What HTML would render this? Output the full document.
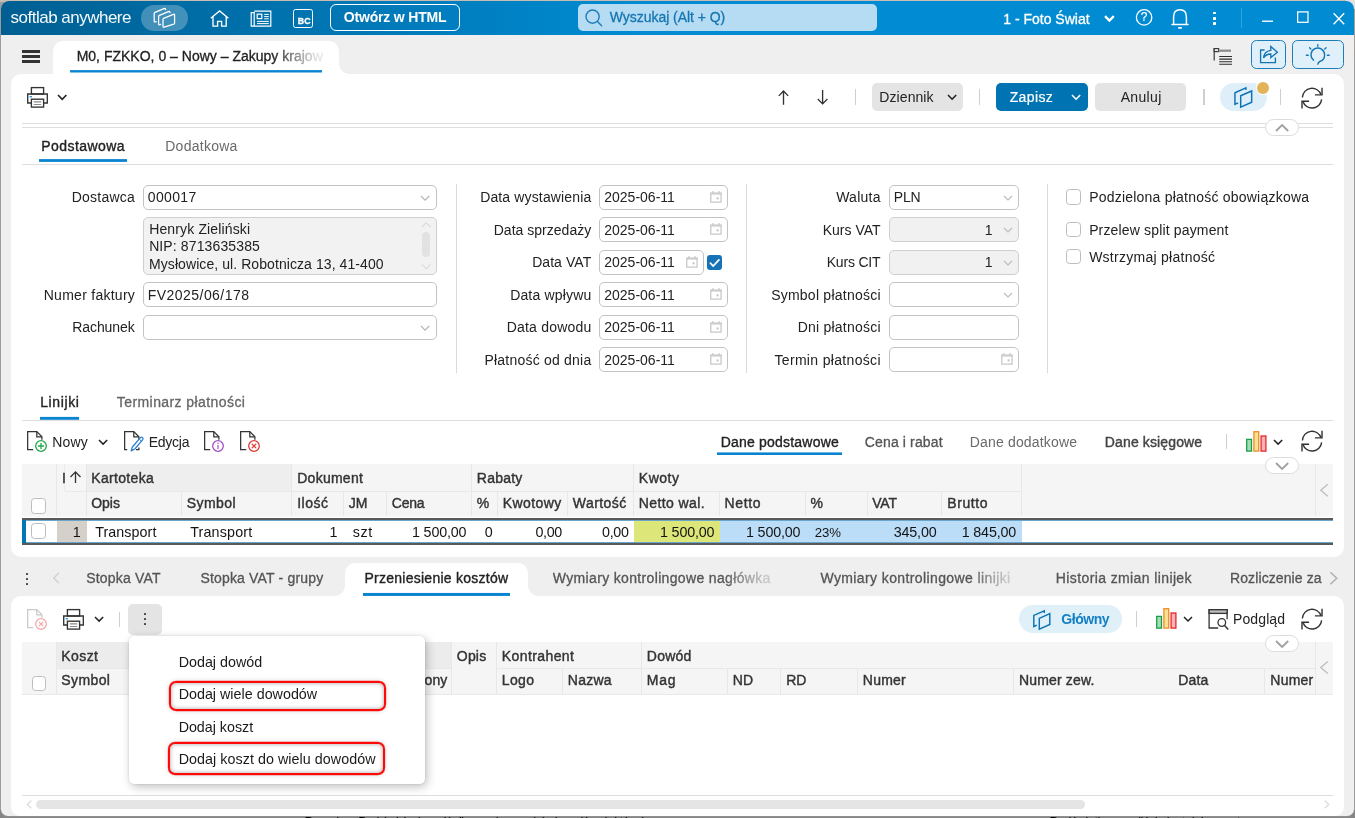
<!DOCTYPE html>
<html lang="pl">
<head>
<meta charset="utf-8">
<title>softlab anywhere – M0, FZKKO, 0 – Nowy – Zakupy krajowe</title>
<style>
html,body{margin:0;padding:0}
body{width:1355px;height:818px;position:relative;overflow:hidden;background:#9e9e9e;font-family:"Liberation Sans",sans-serif;font-size:14px;color:#222}
#app{left:0;top:0;width:1355px;height:818px;overflow:hidden;will-change:transform}
.a,.t,svg.i{position:absolute}
.t{white-space:pre;display:block}
svg.i{overflow:visible;fill:none}
#outer-top{left:0;top:0;width:1355px;height:2px;background:#c9bdb3}
#outer-right{left:1352px;top:0;width:3px;height:818px;background:linear-gradient(180deg,#b3a59c 0,#a0a0a0 70px)}
#outer-tr{left:1346px;top:0;width:9px;height:9px;background:#e2e2e2}
#under{left:0;top:810px;width:1355px;height:8px;background:#858585;overflow:hidden}
#win{left:1px;top:1px;width:1353px;height:815.4px;background:#efefef;border-radius:8px 8px 7px 7px;box-shadow:0 .5px 0 .3px rgba(150,150,150,.8)}
#topbar{left:1px;top:1px;width:1353px;height:33.5px;border-radius:8px 8px 0 0;background:linear-gradient(90deg,#005f92 0,#008bd2 640px)}
.panel{background:#fff}
.hl{height:1px;background:#dedede}
.vl{width:1px;background:#d9d9d9}
.sep{width:1.3px;background:#cfcfcf}
.inp{box-sizing:border-box;border:1px solid #c3c3c3;border-radius:5px;background:#fff;height:25px}
.inp.dis{background:#f1f1f1;border-color:#cfcfcf}
.cb{box-sizing:border-box;width:15px;height:15px;border:1px solid #bdbdbd;border-radius:3.5px;background:#fff}
.btn{border-radius:5px;background:#e4e4e4}
.ul{height:2.7px;background:#0a84cf;border-radius:1px}
.gh{background:#f5f5f5}
.pill{background:#fff;border:1px solid #dcdcdc;border-radius:9px;box-sizing:border-box}
</style>
</head>
<body>
<div class="a" id="app">
<div class="a" id="outer-top"></div><div class="a" id="outer-right"></div><div class="a" id="outer-tr"></div>
<div class="a" id="under"><span class="t" style="left:304.48px;top:813.00px;font-size:13px;line-height:13px;letter-spacing:-1.293px;color:#000;top:4.6px">Procedura „Dodaj wiele dowodów” pozwala na wybór dowodów, do których</span><span class="t" style="left:1049.48px;top:813.00px;font-size:13px;line-height:13px;letter-spacing:-0.591px;color:#000;top:4.6px">Podświetlony na liście jest dokument</span></div>
<div class="a" id="win"></div>

<header id="app-chrome" aria-label="softlab anywhere">
<div class="a" id="topbar"></div>
<span class="t" style="left:10.62px;top:9.00px;font-size:17px;line-height:17px;letter-spacing:-0.511px;color:#fff;opacity:.96">softlab anywhere</span>
<div class="a" style="left:141.3px;top:4.9px;width:47px;height:26px;border-radius:13px;background:rgba(255,255,255,.26)"></div>
<svg class="i" style="left:150px;top:5px" width="30" height="26" viewBox="150 5 30 26" stroke="#fff" stroke-width="1.25" stroke-linejoin="round" stroke-linecap="round">
<path d="M165.6 9.6 Q165.4 8.1 164 8.6 L155 12.4 Q154.2 12.8 154.2 13.6 L154.2 21.2 Q154.2 22.2 155.4 21.9 L156.2 21.6"/>
<path d="M170 12.6 Q169.8 11.1 168.4 11.6 L159.4 15.4 Q158.6 15.8 158.6 16.6 L158.6 24 Q158.6 25 159.8 24.7 L160.6 24.4"/>
<path d="M163.6 18.4 L173.4 14.3 Q174.6 13.9 174.6 15.1 L174.6 23 Q174.6 23.8 173.8 24.1 L164.2 27.1 Q163 27.4 163 26.2 L163 19.4 Q163 18.7 163.6 18.4 Z"/>
</svg>
<svg class="i" style="left:208px;top:8px" width="24" height="22" viewBox="208 8 24 22" stroke="#fff" stroke-width="1.35" stroke-linejoin="miter" stroke-linecap="butt">
<path d="M210.8 18.2 L219.6 10.9 L228.4 18.2"/>
<path d="M213 16.6 L213 26.1 L217.6 26.1 L217.6 21.4 L221.6 21.4 L221.6 26.1 L226.2 26.1 L226.2 16.6"/>
</svg>
<svg class="i" style="left:249px;top:8px" width="24" height="22" viewBox="249 8 24 22" stroke="#fff" stroke-width="1.2">
<path d="M254.2 11.2 H270.8 V26.2 H251.2 V12.6 H254.2 V26.2"/>
<rect x="257.2" y="14.2" width="4.6" height="4.4"/>
<path d="M264.2 14.4 H268.8 M264.2 16.6 H268.8 M264.2 18.8 H268.8 M257 21.4 H268.8 M257 23.6 H268.8" stroke-width="1"/>
</svg>
<div class="a" style="left:293.2px;top:9.2px;width:19.4px;height:18.4px;box-sizing:border-box;border:1.3px solid #fff;border-radius:2.5px"></div>
<span class="t" style="left:297.65px;top:17.00px;font-size:8.8px;line-height:8.8px;font-weight:700;letter-spacing:0.185px;color:#fff;-webkit-text-stroke:.3px">BC</span>
<div class="a" style="left:330px;top:4px;width:130px;height:27px;box-sizing:border-box;border:1.3px solid #fff;border-radius:6px"></div>
<span class="t" style="left:343.84px;top:10.00px;font-size:14px;line-height:14px;font-weight:700;letter-spacing:-0.190px;color:#fff">Otwórz w HTML</span>
<div class="a" style="left:578.4px;top:4px;width:298.6px;height:27px;border-radius:5px;background:#b5dcf2"></div>
<svg class="i" style="left:583px;top:7px" width="22" height="22" viewBox="583 7 22 22" stroke="#1c7db8" stroke-width="1.4" stroke-linecap="round">
<circle cx="592.6" cy="16.6" r="6.6"/><path d="M597.5 21.6 L601.6 25.7"/></svg>
<span class="t" style="left:609.84px;top:10.00px;font-size:14px;line-height:14px;letter-spacing:-0.050px;color:#1776b1;-webkit-text-stroke:.3px">Wyszukaj (Alt + Q)</span>
<span class="t" style="left:1003.24px;top:12.00px;font-size:14px;line-height:14px;color:#fff;-webkit-text-stroke:.3px">1 - Foto Świat</span>
<svg class="i" style="left:1102px;top:12px" width="14" height="14" viewBox="1102 12 14 14" stroke="#fff" stroke-width="2.3"><path d="M1105 16.1 L1109.4 20.5 L1113.8 16.1"/></svg>
<svg class="i" style="left:1133px;top:7px" width="22" height="22" viewBox="1133 7 22 22" stroke="#fff" stroke-width="1.3"><circle cx="1144.1" cy="17.4" r="7.7"/></svg>
<span class="t" style="left:1140.72px;top:11.00px;font-size:12px;line-height:12px;color:#fff;-webkit-text-stroke:.2px">?</span>
<svg class="i" style="left:1168px;top:6px" width="24" height="24" viewBox="1168 6 24 24" stroke="#fff" stroke-width="1.5" stroke-linecap="round" stroke-linejoin="round">
<path d="M1173.6 24.4 V17 Q1173.6 9.8 1180 9.8 Q1186.4 9.8 1186.4 17 V24.4 M1172 24.6 H1188"/><path d="M1178.8 27.8 H1181.2" stroke-width="1.7"/></svg>
<div class="a" style="left:1213.1px;top:11.6px;width:2.7px;height:2.7px;background:#fff;border-radius:.6px"></div>
<div class="a" style="left:1213.1px;top:16.9px;width:2.7px;height:2.7px;background:#fff;border-radius:.6px"></div>
<div class="a" style="left:1213.1px;top:22.1px;width:2.7px;height:2.7px;background:#fff;border-radius:.6px"></div>
<div class="a" style="left:1240.8px;top:7.6px;width:1.2px;height:20.4px;background:#35a3de"></div>
<div class="a" style="left:1262px;top:20px;width:11px;height:2px;background:linear-gradient(180deg,rgba(255,255,255,0.45) 0px,rgba(255,255,255,0.45) 1px,rgba(255,255,255,0.90) 1px,rgba(255,255,255,0.90) 2px)"></div>
<svg class="i" style="left:1294px;top:9px" width="18" height="18" viewBox="1294 9 18 18" stroke="#fff" stroke-width="1.25"><rect x="1297.65" y="11.9" width="10.35" height="10.4"/></svg>
<svg class="i" style="left:1330px;top:10px" width="18" height="18" viewBox="1330 10 18 18" stroke="#fff" stroke-width="1.4"><path d="M1333.6 13.2 L1344.2 24.2 M1344.2 13.2 L1333.6 24.2"/></svg>
<div class="a" style="left:22.2px;top:50.2px;width:18.2px;height:2.5px;background:#333"></div>
<div class="a" style="left:22.2px;top:55.2px;width:18.2px;height:2.5px;background:#333"></div>
<div class="a" style="left:22.2px;top:60.3px;width:18.2px;height:2.5px;background:#333"></div>
<div class="a" style="left:53.3px;top:41.3px;width:286px;height:33px;background:#fff;border-radius:10px 10px 0 0"></div>
<div class="a" style="left:339.2px;top:64px;width:10px;height:10px;background:radial-gradient(circle at 100% 0,rgba(255,255,255,0) 9.5px,#fff 10px)"></div>
<span class="t" style="left:76.64px;top:49.00px;font-size:14px;line-height:14px;letter-spacing:0.008px;-webkit-text-stroke:.3px;padding-bottom:4px;-webkit-mask-image:linear-gradient(90deg,#000 196px,rgba(0,0,0,.12) 240px);mask-image:linear-gradient(90deg,#000 196px,rgba(0,0,0,.12) 240px)">M0, FZKKO, 0 – Nowy – Zakupy krajow</span>
<div class="a" style="left:70px;top:70px;width:252px;height:3px;background:linear-gradient(180deg,rgba(10,132,207,0.90) 0px,rgba(10,132,207,0.90) 1px,rgba(10,132,207,1.00) 1px,rgba(10,132,207,1.00) 2px,rgba(10,132,207,0.50) 2px,rgba(10,132,207,0.50) 3px)"></div>
<svg class="i" style="left:1212px;top:46px" width="22" height="20" viewBox="1212 46 22 20" stroke="#3a3a3a" stroke-width="1.2">
<path d="M1214.2 48 V60.6"/><rect x="1214.2" y="48.6" width="4.4" height="3" fill="#efefef"/><rect x="1218.6" y="49.6" width="12.4" height="2.2" fill="#8a8a8a" stroke="none"/>
<path d="M1219.2 56.5 H1232 M1219.2 59.1 H1232 M1219.2 61.7 H1232 M1219.2 64.3 H1232" stroke-width="1.05" stroke="#2e2e2e"/></svg>
<div class="a" style="left:1251.2px;top:40px;width:34.8px;height:28.6px;box-sizing:border-box;border:1.2px solid #1b7db9;border-radius:5.5px;background:#dff0fa"></div>
<svg class="i" style="left:1256px;top:43px" width="26" height="24" viewBox="1256 43 26 24" stroke="#1475b3" stroke-width="1.35" stroke-linejoin="miter">
<path d="M1264.6 50 H1260.6 V62.6 H1275.4 V57.4"/>
<path d="M1263.6 58 Q1264 51.4 1270.8 50.4 V46.4 L1277.4 52.2 L1270.8 57.6 V54 Q1266 54 1263.6 58 Z"/></svg>
<div class="a" style="left:1291.7px;top:40px;width:52px;height:28.6px;box-sizing:border-box;border:1.2px solid #1b7db9;border-radius:5.5px;background:#dff0fa"></div>
<svg class="i" style="left:1304px;top:42px" width="28" height="26" viewBox="1304 42 28 26" stroke="#1475b3" stroke-width="1.35" stroke-linecap="round">
<path d="M1319.6 61.6 Q1324.6 60 1324.6 55 A6.8 6.8 0 1 0 1313.6 60.2 M1319.6 61.6 Q1318.2 62.6 1317.8 64.2"/>
<path d="M1317.8 44.6 V46.2 M1309.6 47.8 L1310.8 49 M1326 47.8 L1324.8 49 M1306.4 55.2 H1308.2 M1327.4 55.2 H1329.2"/></svg>
<div class="a panel" style="left:11px;top:73.8px;width:1333px;height:483px;border-radius:10px"></div>
<svg class="i" style="left:26.2px;top:86.2px" width="24" height="24" viewBox="-1 -1 24 24" stroke="#333" stroke-width="1.35"><rect x="4.4" y="0.6" width="12.2" height="6.4"/><path d="M4.4 16 H0.7 V7 H20.3 V16 H16.6"/><rect x="4.4" y="12.2" width="12.2" height="7.9" fill="#fff"/><path d="M6.8 14.9 H14.2 M6.8 17.5 H14.2" stroke="#8c8c8c" stroke-width="1.1"/><path d="M2.6 9.7 H5" stroke="#2a8fd6" stroke-width="1.3"/></svg>
<svg class="i" style="left:56.4px;top:93.4px" width="12.4" height="8.3" viewBox="-2 -2 12.4 8.3" stroke="#222" stroke-width="1.6"><path d="M0 0 L4.20 4.30 L8.40 0"/></svg>
<svg class="i" style="left:774px;top:86px" width="60" height="22" viewBox="774 86 60 22" stroke="#333" stroke-width="1.35" stroke-linejoin="miter">
<path d="M783.5 104.8 V91 M778.8 95.9 L783.5 91 L788.2 95.9"/><path d="M822.6 90.1 V103.9 M817.8 99.1 L822.6 103.9 L827.4 99.1"/></svg>
<div class="a sep" style="left:854.8px;top:89.4px;height:15.2px"></div>
<div class="a btn" style="left:872px;top:83px;width:91px;height:28px"></div>
<span class="t" style="left:879.34px;top:90.00px;font-size:14px;line-height:14px;letter-spacing:0.074px">Dziennik</span>
<svg class="i" style="left:945.8px;top:93.4px" width="12.2" height="8.2" viewBox="-2 -2 12.2 8.2" stroke="#222" stroke-width="1.6"><path d="M0 0 L4.10 4.20 L8.20 0"/></svg>
<div class="a sep" style="left:978.6px;top:89.4px;height:15.2px"></div>
<div class="a btn" style="left:996px;top:83px;width:92px;height:28px;background:#0073b2"></div>
<span class="t" style="left:1009.64px;top:90.00px;font-size:14px;line-height:14px;letter-spacing:0.397px;color:#fff;-webkit-text-stroke:.2px">Zapisz</span>
<svg class="i" style="left:1070.4px;top:93.4px" width="12.2" height="8.2" viewBox="-2 -2 12.2 8.2" stroke="#fff" stroke-width="1.6"><path d="M0 0 L4.10 4.20 L8.20 0"/></svg>
<div class="a btn" style="left:1095px;top:83px;width:91px;height:28px"></div>
<span class="t" style="left:1120.64px;top:90.00px;font-size:14px;line-height:14px;letter-spacing:0.340px">Anuluj</span>
<div class="a sep" style="left:1203.4px;top:89.4px;height:15.2px"></div>
<div class="a" style="left:1219.9px;top:83px;width:47px;height:28px;border-radius:14px;background:#deeffa"></div>
<div class="a" style="left:1255.6px;top:79.8px;width:15.6px;height:15.6px;border-radius:50%;background:#fff"></div>
<div class="a" style="left:1257.4px;top:81.6px;width:12px;height:12px;border-radius:50%;background:#e2b357"></div>
<svg class="i" style="left:1232.2px;top:85.3px" width="22.5" height="25.1" viewBox="-2 -2 21.5 24" stroke="#0b73b3" stroke-width="1.39" stroke-linejoin="miter"><path d="M11.3 2.9 V0.8 L0.8 5.4 V16.5 L3.8 15.1"/><path d="M6.3 8.3 L16.8 3.7 V14.5 L6.3 19.1 Z"/></svg>
<div class="a sep" style="left:1280px;top:89.4px;height:15.2px"></div>
<svg class="i" style="left:1298.4px;top:83.5px" width="28" height="28" viewBox="-14.4 -14.4 28.8 28.8" stroke="#333" stroke-width="1.45" stroke-linejoin="miter"><path d="M-9.9 -0.6 A9.9 9.9 0 0 1 9.4 -3.2"/><path d="M10.3 -10.6 V-3.2 H3"/><path d="M9.9 1.4 A9.9 9.9 0 0 1 -9.4 3.4"/><path d="M-10.3 10.8 V3.4 H-3"/></svg>
<div class="a hl" style="left:22px;top:123.1px;width:1311px"></div>
<div class="a hl" style="left:22px;top:127px;width:1311px"></div>
<div class="a pill" style="left:1264.5px;top:119.4px;width:34px;height:16.6px"></div>
<svg class="i" style="left:1273.6px;top:122.5px" width="16.2" height="10.0" viewBox="-2 -2 16.2 10.0" stroke="#a2a2a2" stroke-width="1.9"><path d="M0 6.00 L6.10 0 L12.20 6.00"/></svg>
</header>
<section id="doc-form" aria-label="Podstawowa">
<span class="t" style="left:41.24px;top:139.00px;font-size:14px;line-height:14px;letter-spacing:0.437px;-webkit-text-stroke:.3px;-webkit-text-stroke:.35px">Podstawowa</span>
<span class="t" style="left:165.24px;top:139.00px;font-size:14px;line-height:14px;letter-spacing:0.259px;color:#6a6a6a">Dodatkowa</span>
<div class="a" style="left:39px;top:159px;width:88px;height:3px;background:linear-gradient(180deg,rgba(10,132,207,0.90) 0px,rgba(10,132,207,0.90) 1px,rgba(10,132,207,1.00) 1px,rgba(10,132,207,1.00) 2px,rgba(10,132,207,0.90) 2px,rgba(10,132,207,0.90) 3px)"></div>
<div class="a hl" style="left:22px;top:163.6px;width:1311px"></div>
<span class="t" style="left:71.74px;top:190.00px;font-size:14px;line-height:14px;letter-spacing:0.236px">Dostawca</span>
<div class="a inp" style="left:143px;top:185px;width:294px"></div>
<span class="t" style="left:147.84px;top:190.00px;font-size:14px;line-height:14px;letter-spacing:0.340px">000017</span>
<svg class="i" style="left:419.2px;top:193.6px" width="12.2" height="8.1" viewBox="-2 -2 12.2 8.1" stroke="#b5b5b5" stroke-width="1.2"><path d="M0 0 L4.10 4.10 L8.20 0"/></svg>
<div class="a inp dis" style="left:143px;top:217px;width:294px;height:58px;background:#f2f2f2"></div>
<span class="t" style="left:149.14px;top:222.00px;font-size:14px;line-height:14px;letter-spacing:0.147px">Henryk Zieliński</span>
<span class="t" style="left:149.14px;top:239.00px;font-size:14px;line-height:14px;letter-spacing:0.124px">NIP: 8713635385</span>
<span class="t" style="left:149.04px;top:257.00px;font-size:14px;line-height:14px;letter-spacing:0.075px">Mysłowice, ul. Robotnicza 13, 41-400</span>
<div class="a" style="left:422px;top:231.6px;width:8px;height:25.8px;border-radius:4px;background:#e2e2e2"></div>
<svg class="i" style="left:420px;top:220px" width="12" height="52" viewBox="420 220 12 52" stroke="#dcdcdc" stroke-width="1.2"><path d="M421.8 227 L426.2 222.8 L430.6 227 M421.8 264.4 L426.2 268.6 L430.6 264.4"/></svg>
<span class="t" style="left:43.74px;top:288.00px;font-size:14px;line-height:14px;letter-spacing:0.267px">Numer faktury</span>
<div class="a inp" style="left:143px;top:282px;width:294px"></div>
<span class="t" style="left:147.84px;top:288.00px;font-size:14px;line-height:14px;letter-spacing:0.448px">FV2025/06/178</span>
<span class="t" style="left:72.14px;top:320.00px;font-size:14px;line-height:14px;letter-spacing:-0.047px">Rachunek</span>
<div class="a inp" style="left:143px;top:315px;width:294px"></div>
<svg class="i" style="left:419.2px;top:323.6px" width="12.2" height="8.1" viewBox="-2 -2 12.2 8.1" stroke="#b5b5b5" stroke-width="1.2"><path d="M0 0 L4.10 4.10 L8.20 0"/></svg>
<div class="a vl" style="left:456.4px;top:184.3px;height:188.4px"></div>
<div class="a vl" style="left:746.4px;top:184.3px;height:188.4px"></div>
<div class="a vl" style="left:1047px;top:184.3px;height:188.4px"></div>
<span class="t" style="left:480.14px;top:190.00px;font-size:14px;line-height:14px;letter-spacing:0.146px">Data wystawienia</span>
<div class="a inp" style="left:599px;top:185px;width:129px"></div>
<span class="t" style="left:604.24px;top:190.00px;font-size:14px;line-height:14px;letter-spacing:0.005px">2025-06-11</span>
<svg class="i" style="left:709.2px;top:190.4px" width="14" height="14" viewBox="-1 -1 14 14" stroke="#cdcdcd" stroke-width="1.4"><rect x="0.75" y="2.3" width="10.3" height="8.8"/><path d="M0.05 2.6 H11.75" stroke-width="2"/><path d="M2.8 0.2 V2 M9 0.2 V2" stroke-width="1.7"/><circle cx="7.6" cy="7.4" r="1.15" fill="#c4c4c4" stroke="none"/></svg>
<span class="t" style="left:493.74px;top:223.00px;font-size:14px;line-height:14px;letter-spacing:0.018px">Data sprzedaży</span>
<div class="a inp" style="left:599px;top:217px;width:129px"></div>
<span class="t" style="left:604.24px;top:223.00px;font-size:14px;line-height:14px;letter-spacing:0.005px">2025-06-11</span>
<svg class="i" style="left:709.2px;top:222.4px" width="14" height="14" viewBox="-1 -1 14 14" stroke="#cdcdcd" stroke-width="1.4"><rect x="0.75" y="2.3" width="10.3" height="8.8"/><path d="M0.05 2.6 H11.75" stroke-width="2"/><path d="M2.8 0.2 V2 M9 0.2 V2" stroke-width="1.7"/><circle cx="7.6" cy="7.4" r="1.15" fill="#c4c4c4" stroke="none"/></svg>
<span class="t" style="left:532.14px;top:255.00px;font-size:14px;line-height:14px;letter-spacing:0.071px">Data VAT</span>
<div class="a inp" style="left:599px;top:250px;width:105px"></div>
<span class="t" style="left:604.24px;top:255.00px;font-size:14px;line-height:14px;letter-spacing:0.005px">2025-06-11</span>
<svg class="i" style="left:685.2px;top:255.4px" width="14" height="14" viewBox="-1 -1 14 14" stroke="#cdcdcd" stroke-width="1.4"><rect x="0.75" y="2.3" width="10.3" height="8.8"/><path d="M0.05 2.6 H11.75" stroke-width="2"/><path d="M2.8 0.2 V2 M9 0.2 V2" stroke-width="1.7"/><circle cx="7.6" cy="7.4" r="1.15" fill="#c4c4c4" stroke="none"/></svg>
<span class="t" style="left:510.14px;top:288.00px;font-size:14px;line-height:14px;letter-spacing:0.175px">Data wpływu</span>
<div class="a inp" style="left:599px;top:282px;width:129px"></div>
<span class="t" style="left:604.24px;top:288.00px;font-size:14px;line-height:14px;letter-spacing:0.005px">2025-06-11</span>
<svg class="i" style="left:709.2px;top:287.4px" width="14" height="14" viewBox="-1 -1 14 14" stroke="#cdcdcd" stroke-width="1.4"><rect x="0.75" y="2.3" width="10.3" height="8.8"/><path d="M0.05 2.6 H11.75" stroke-width="2"/><path d="M2.8 0.2 V2 M9 0.2 V2" stroke-width="1.7"/><circle cx="7.6" cy="7.4" r="1.15" fill="#c4c4c4" stroke="none"/></svg>
<span class="t" style="left:506.74px;top:320.00px;font-size:14px;line-height:14px;letter-spacing:0.200px">Data dowodu</span>
<div class="a inp" style="left:599px;top:315px;width:129px"></div>
<span class="t" style="left:604.24px;top:320.00px;font-size:14px;line-height:14px;letter-spacing:0.005px">2025-06-11</span>
<svg class="i" style="left:709.2px;top:320.4px" width="14" height="14" viewBox="-1 -1 14 14" stroke="#cdcdcd" stroke-width="1.4"><rect x="0.75" y="2.3" width="10.3" height="8.8"/><path d="M0.05 2.6 H11.75" stroke-width="2"/><path d="M2.8 0.2 V2 M9 0.2 V2" stroke-width="1.7"/><circle cx="7.6" cy="7.4" r="1.15" fill="#c4c4c4" stroke="none"/></svg>
<span class="t" style="left:484.44px;top:353.00px;font-size:14px;line-height:14px;letter-spacing:0.219px">Płatność od dnia</span>
<div class="a inp" style="left:599px;top:347px;width:129px"></div>
<span class="t" style="left:604.24px;top:353.00px;font-size:14px;line-height:14px;letter-spacing:0.005px">2025-06-11</span>
<svg class="i" style="left:709.2px;top:352.4px" width="14" height="14" viewBox="-1 -1 14 14" stroke="#cdcdcd" stroke-width="1.4"><rect x="0.75" y="2.3" width="10.3" height="8.8"/><path d="M0.05 2.6 H11.75" stroke-width="2"/><path d="M2.8 0.2 V2 M9 0.2 V2" stroke-width="1.7"/><circle cx="7.6" cy="7.4" r="1.15" fill="#c4c4c4" stroke="none"/></svg>
<div class="a" style="left:706.8px;top:254.7px;width:15.2px;height:15.2px;border-radius:3px;background:#1673b5"></div>
<svg class="i" style="left:706.8px;top:254.7px" width="15.2" height="15.2" viewBox="0 0 15.2 15.2" stroke="#fff" stroke-width="1.7"><path d="M2.9 7.6 L6.2 11 L12.4 4.4"/></svg>
<span class="t" style="left:836.14px;top:190.00px;font-size:14px;line-height:14px;letter-spacing:0.271px">Waluta</span>
<div class="a inp" style="left:889px;top:185px;width:130px"></div>
<svg class="i" style="left:1002.0px;top:193.6px" width="12.0" height="8.0" viewBox="-2 -2 12.0 8.0" stroke="#bdbdbd" stroke-width="1.2"><path d="M0 0 L4.00 4.00 L8.00 0"/></svg>
<span class="t" style="left:822.74px;top:223.00px;font-size:14px;line-height:14px">Kurs VAT</span>
<div class="a inp dis" style="left:889px;top:217px;width:130px"></div>
<svg class="i" style="left:1002.0px;top:225.6px" width="12.0" height="8.0" viewBox="-2 -2 12.0 8.0" stroke="#bdbdbd" stroke-width="1.2"><path d="M0 0 L4.00 4.00 L8.00 0"/></svg>
<span class="t" style="left:984.76px;top:223.00px;font-size:14px;line-height:14px">1</span>
<span class="t" style="left:826.74px;top:255.00px;font-size:14px;line-height:14px;letter-spacing:-0.202px">Kurs CIT</span>
<div class="a inp dis" style="left:889px;top:250px;width:130px"></div>
<svg class="i" style="left:1002.0px;top:258.6px" width="12.0" height="8.0" viewBox="-2 -2 12.0 8.0" stroke="#bdbdbd" stroke-width="1.2"><path d="M0 0 L4.00 4.00 L8.00 0"/></svg>
<span class="t" style="left:984.76px;top:255.00px;font-size:14px;line-height:14px">1</span>
<span class="t" style="left:771.14px;top:288.00px;font-size:14px;line-height:14px;letter-spacing:0.239px">Symbol płatności</span>
<div class="a inp" style="left:889px;top:282px;width:130px"></div>
<svg class="i" style="left:1002.0px;top:290.6px" width="12.0" height="8.0" viewBox="-2 -2 12.0 8.0" stroke="#bdbdbd" stroke-width="1.2"><path d="M0 0 L4.00 4.00 L8.00 0"/></svg>
<span class="t" style="left:797.74px;top:320.00px;font-size:14px;line-height:14px;letter-spacing:0.222px">Dni płatności</span>
<div class="a inp" style="left:889px;top:315px;width:130px"></div>
<span class="t" style="left:774.44px;top:353.00px;font-size:14px;line-height:14px;letter-spacing:0.331px">Termin płatności</span>
<div class="a inp" style="left:889px;top:347px;width:130px"></div>
<span class="t" style="left:893.84px;top:190.00px;font-size:14px;line-height:14px;letter-spacing:-0.257px">PLN</span>
<svg class="i" style="left:999.6px;top:352.4px" width="14" height="14" viewBox="-1 -1 14 14" stroke="#cdcdcd" stroke-width="1.4"><rect x="0.75" y="2.3" width="10.3" height="8.8"/><path d="M0.05 2.6 H11.75" stroke-width="2"/><path d="M2.8 0.2 V2 M9 0.2 V2" stroke-width="1.7"/><circle cx="7.6" cy="7.4" r="1.15" fill="#c4c4c4" stroke="none"/></svg>
<div class="a cb" style="left:1066px;top:189px;height:16px"></div>
<span class="t" style="left:1089.14px;top:190.00px;font-size:14px;line-height:14px;letter-spacing:0.222px">Podzielona płatność obowiązkowa</span>
<div class="a cb" style="left:1066px;top:222px;height:15px"></div>
<span class="t" style="left:1089.14px;top:223.00px;font-size:14px;line-height:14px;letter-spacing:0.157px">Przelew split payment</span>
<div class="a cb" style="left:1066px;top:249px;height:15px"></div>
<span class="t" style="left:1089.14px;top:250.00px;font-size:14px;line-height:14px;letter-spacing:0.268px">Wstrzymaj płatność</span>
</section>
<section id="lines-grid" aria-label="Linijki">
<span class="t" style="left:40.24px;top:395.00px;font-size:14px;line-height:14px;letter-spacing:0.601px;-webkit-text-stroke:.3px;-webkit-text-stroke:.35px">Linijki</span>
<span class="t" style="left:116.84px;top:395.00px;font-size:14px;line-height:14px;letter-spacing:0.417px;color:#666;-webkit-text-stroke:.3px">Terminarz płatności</span>
<div class="a" style="left:40px;top:416px;width:39px;height:4px;background:linear-gradient(180deg,rgba(10,132,207,0.10) 0px,rgba(10,132,207,0.10) 1px,rgba(10,132,207,1.00) 1px,rgba(10,132,207,1.00) 2px,rgba(10,132,207,1.00) 2px,rgba(10,132,207,1.00) 3px,rgba(10,132,207,0.80) 3px,rgba(10,132,207,0.80) 4px)"></div>
<div class="a hl" style="left:22px;top:420px;width:1311px"></div>
<svg class="i" style="left:26.2px;top:430.4px" width="26" height="24" viewBox="-1 -1 26 24" stroke="#333" stroke-width="1.25" stroke-linejoin="miter"><path d="M6.2 18.7 H0.65 V0.65 H9.8 L14.9 5.8 V8.8"/><path d="M9.8 0.8 V5.8 H14.8"/></svg>
<svg class="i" style="left:33.8px;top:439.1px" width="14" height="14" viewBox="-7 -7 14 14" stroke="#1fa84a" stroke-width="1.3"><circle cx="0" cy="0" r="5.3" fill="#fff"/><path d="M-3 0 H3 M0 -3 V3"/></svg>
<span class="t" style="left:52.24px;top:435.00px;font-size:14px;line-height:14px;letter-spacing:0.168px">Nowy</span>
<svg class="i" style="left:96.6px;top:437.6px" width="12.2" height="8.1" viewBox="-2 -2 12.2 8.1" stroke="#222" stroke-width="1.5"><path d="M0 0 L4.10 4.10 L8.20 0"/></svg>
<svg class="i" style="left:123.2px;top:430.4px" width="26" height="24" viewBox="-1 -1 26 24" stroke="#333" stroke-width="1.25" stroke-linejoin="miter"><path d="M3.2 18.7 H0.65 V0.65 H9.8 L14.9 5.8 V8.8"/><path d="M9.8 0.8 V5.8 H14.8"/><path d="M12 18.7 H14.9 V16.6"/></svg>
<svg class="i" style="left:128px;top:434px" width="18" height="20" viewBox="128 434 18 20" stroke="#2a7fd0" stroke-width="1.3" stroke-linejoin="round"><path d="M131.2 450.8 L132.4 447 L140.4 437.6 Q141.6 436.6 142.6 437.6 Q143.6 438.6 142.6 439.8 L134.8 449 Z" fill="#fff"/><path d="M139.2 439 L141.4 441.2" stroke-width="1"/></svg>
<span class="t" style="left:148.74px;top:435.00px;font-size:14px;line-height:14px;letter-spacing:-0.262px">Edycja</span>
<svg class="i" style="left:203.4px;top:430.4px" width="26" height="24" viewBox="-1 -1 26 24" stroke="#333" stroke-width="1.25" stroke-linejoin="miter"><path d="M6.2 18.7 H0.65 V0.65 H9.8 L14.9 5.8 V8.8"/><path d="M9.8 0.8 V5.8 H14.8"/></svg>
<svg class="i" style="left:210.8px;top:439.1px" width="14" height="14" viewBox="-7 -7 14 14" stroke="#a04fc0" stroke-width="1.3"><circle cx="0" cy="0" r="5.3" fill="#fff"/><path d="M0 -0.9 V3" stroke-width="1.2"/><circle cx="0" cy="-2.7" r=".75" fill="#a04fc0" stroke="none"/></svg>
<svg class="i" style="left:239.4px;top:430.4px" width="26" height="24" viewBox="-1 -1 26 24" stroke="#333" stroke-width="1.25" stroke-linejoin="miter"><path d="M6.2 18.7 H0.65 V0.65 H9.8 L14.9 5.8 V8.8"/><path d="M9.8 0.8 V5.8 H14.8"/></svg>
<svg class="i" style="left:247.0px;top:439.1px" width="14" height="14" viewBox="-7 -7 14 14" stroke="#e53935" stroke-width="1.3"><circle cx="0" cy="0" r="5.3" fill="#fff"/><path d="M-2.1 -2.1 L2.1 2.1 M2.1 -2.1 L-2.1 2.1"/></svg>
<span class="t" style="left:720.64px;top:435.00px;font-size:14px;line-height:14px;letter-spacing:0.209px;-webkit-text-stroke:.3px;-webkit-text-stroke:.35px">Dane podstawowe</span>
<div class="a" style="left:717px;top:452px;width:125px;height:3px;background:linear-gradient(180deg,rgba(10,132,207,0.60) 0px,rgba(10,132,207,0.60) 1px,rgba(10,132,207,1.00) 1px,rgba(10,132,207,1.00) 2px,rgba(10,132,207,1.00) 2px,rgba(10,132,207,1.00) 3px)"></div>
<span class="t" style="left:864.84px;top:435.00px;font-size:14px;line-height:14px;letter-spacing:0.131px;color:#555;-webkit-text-stroke:.3px">Cena i rabat</span>
<span class="t" style="left:969.84px;top:435.00px;font-size:14px;line-height:14px;letter-spacing:0.157px;color:#6a6a6a">Dane dodatkowe</span>
<span class="t" style="left:1104.84px;top:435.00px;font-size:14px;line-height:14px;letter-spacing:0.132px;color:#444;-webkit-text-stroke:.3px;-webkit-text-stroke:.4px">Dane księgowe</span>
<div class="a sep" style="left:1226px;top:433.6px;height:15.2px"></div>
<svg class="i" style="left:1244.6px;top:429.6px" width="23" height="23" viewBox="-1 -1 23 23" stroke-width="1.3"><rect x="0.7" y="8.4" width="4.8" height="11.7" fill="#a9dcb6" stroke="#17a04a"/><rect x="7.9" y="0.7" width="4.8" height="19.4" fill="#fbe092" stroke="#f08c28"/><rect x="15.1" y="5" width="4.8" height="15.1" fill="#f6b4b6" stroke="#e6262c"/></svg>
<svg class="i" style="left:1272.4px;top:437.6px" width="12.2" height="8.1" viewBox="-2 -2 12.2 8.1" stroke="#222" stroke-width="1.5"><path d="M0 0 L4.10 4.10 L8.20 0"/></svg>
<svg class="i" style="left:1298.4px;top:427.4px" width="28" height="28" viewBox="-14.4 -14.4 28.8 28.8" stroke="#333" stroke-width="1.45" stroke-linejoin="miter"><path d="M-9.9 -0.6 A9.9 9.9 0 0 1 9.4 -3.2"/><path d="M10.3 -10.6 V-3.2 H3"/><path d="M9.9 1.4 A9.9 9.9 0 0 1 -9.4 3.4"/><path d="M-10.3 10.8 V3.4 H-3"/></svg>
<div class="a gh" style="left:22px;top:464px;width:1311px;height:52px"></div>
<div class="a" style="left:22px;top:516px;width:1311px;height:1px;background:#f9f9f9"></div>
<div class="a" style="left:86px;top:464px;width:206px;height:27px;background:#eeeeee"></div>
<div class="a" style="left:65px;top:464px;width:21px;height:27px;background:#f6f6f6;box-shadow:-1px 0 0 #ececec"></div>
<div class="a" style="left:65px;top:491px;width:956.6px;height:1px;background:#e8e8e8"></div>
<div class="a" style="left:56px;top:464px;width:1px;height:52px;background:#e8e8e8"></div>
<div class="a" style="left:86px;top:464px;width:1px;height:52px;background:#e8e8e8"></div>
<div class="a" style="left:291px;top:464px;width:1px;height:52px;background:#e8e8e8"></div>
<div class="a" style="left:471px;top:464px;width:1px;height:52px;background:#e8e8e8"></div>
<div class="a" style="left:633px;top:464px;width:1px;height:52px;background:#e8e8e8"></div>
<div class="a" style="left:1021px;top:464px;width:1px;height:52px;background:#e8e8e8"></div>
<div class="a" style="left:1315px;top:464px;width:1px;height:52px;background:#e8e8e8"></div>
<div class="a" style="left:181px;top:491px;width:1px;height:25px;background:#e8e8e8"></div>
<div class="a" style="left:343px;top:491px;width:1px;height:25px;background:#e8e8e8"></div>
<div class="a" style="left:386px;top:491px;width:1px;height:25px;background:#e8e8e8"></div>
<div class="a" style="left:497px;top:491px;width:1px;height:25px;background:#e8e8e8"></div>
<div class="a" style="left:567px;top:491px;width:1px;height:25px;background:#e8e8e8"></div>
<div class="a" style="left:719px;top:491px;width:1px;height:25px;background:#e8e8e8"></div>
<div class="a" style="left:805px;top:491px;width:1px;height:25px;background:#e8e8e8"></div>
<div class="a" style="left:867px;top:491px;width:1px;height:25px;background:#e8e8e8"></div>
<div class="a" style="left:941px;top:491px;width:1px;height:25px;background:#e8e8e8"></div>
<span class="t" style="left:62.04px;top:471.00px;font-size:14px;line-height:14px;color:#333;-webkit-text-stroke:.3px;-webkit-text-stroke:.4px">I</span>
<svg class="i" style="left:70px;top:470px" width="14" height="16" viewBox="70 470 14 16" stroke="#333" stroke-width="1.3"><path d="M75.5 482.9 V471.9 M70.5 477 L75.5 471.9 L80.5 477"/></svg>
<span class="t" style="left:91.24px;top:471.00px;font-size:14px;line-height:14px;letter-spacing:0.335px;color:#333;-webkit-text-stroke:.3px;-webkit-text-stroke:.4px">Kartoteka</span>
<span class="t" style="left:297.24px;top:471.00px;font-size:14px;line-height:14px;letter-spacing:0.258px;color:#333;-webkit-text-stroke:.3px;-webkit-text-stroke:.4px">Dokument</span>
<span class="t" style="left:476.84px;top:471.00px;font-size:14px;line-height:14px;letter-spacing:0.212px;color:#333;-webkit-text-stroke:.3px;-webkit-text-stroke:.4px">Rabaty</span>
<span class="t" style="left:638.84px;top:471.00px;font-size:14px;line-height:14px;letter-spacing:0.499px;color:#333;-webkit-text-stroke:.3px;-webkit-text-stroke:.4px">Kwoty</span>
<span class="t" style="left:91.24px;top:496.00px;font-size:14px;line-height:14px;letter-spacing:-0.026px;color:#333;-webkit-text-stroke:.3px;-webkit-text-stroke:.4px">Opis</span>
<span class="t" style="left:186.84px;top:496.00px;font-size:14px;line-height:14px;letter-spacing:0.406px;color:#333;-webkit-text-stroke:.3px;-webkit-text-stroke:.4px">Symbol</span>
<span class="t" style="left:297.24px;top:496.00px;font-size:14px;line-height:14px;letter-spacing:0.481px;color:#333;-webkit-text-stroke:.3px;-webkit-text-stroke:.4px">Ilość</span>
<span class="t" style="left:348.84px;top:496.00px;font-size:14px;line-height:14px;color:#333;-webkit-text-stroke:.3px;-webkit-text-stroke:.4px">JM</span>
<span class="t" style="left:391.84px;top:496.00px;font-size:14px;line-height:14px;letter-spacing:-0.250px;color:#333;-webkit-text-stroke:.3px;-webkit-text-stroke:.4px">Cena</span>
<span class="t" style="left:476.84px;top:496.00px;font-size:14px;line-height:14px;color:#333;-webkit-text-stroke:.3px;-webkit-text-stroke:.4px">%</span>
<span class="t" style="left:502.84px;top:496.00px;font-size:14px;line-height:14px;letter-spacing:0.398px;color:#333;-webkit-text-stroke:.3px;-webkit-text-stroke:.4px">Kwotowy</span>
<span class="t" style="left:572.84px;top:496.00px;font-size:14px;line-height:14px;letter-spacing:0.432px;color:#333;-webkit-text-stroke:.3px;-webkit-text-stroke:.4px">Wartość</span>
<span class="t" style="left:638.84px;top:496.00px;font-size:14px;line-height:14px;letter-spacing:0.386px;color:#333;-webkit-text-stroke:.3px;-webkit-text-stroke:.4px">Netto wal.</span>
<span class="t" style="left:724.44px;top:496.00px;font-size:14px;line-height:14px;letter-spacing:0.663px;color:#333;-webkit-text-stroke:.3px;-webkit-text-stroke:.4px">Netto</span>
<span class="t" style="left:810.44px;top:496.00px;font-size:14px;line-height:14px;color:#333;-webkit-text-stroke:.3px;-webkit-text-stroke:.4px">%</span>
<span class="t" style="left:872.24px;top:496.00px;font-size:14px;line-height:14px;letter-spacing:-0.218px;color:#333;-webkit-text-stroke:.3px;-webkit-text-stroke:.4px">VAT</span>
<span class="t" style="left:947.24px;top:496.00px;font-size:14px;line-height:14px;letter-spacing:0.592px;color:#333;-webkit-text-stroke:.3px;-webkit-text-stroke:.4px">Brutto</span>
<div class="a cb" style="left:31px;top:498px;width:15px;height:16px"></div>
<div class="a pill" style="left:1264.5px;top:457px;width:34px;height:16.6px"></div>
<svg class="i" style="left:1273.6px;top:460.6px" width="16.2" height="10.0" viewBox="-2 -2 16.2 10.0" stroke="#a2a2a2" stroke-width="1.9"><path d="M0 0 L6.10 6.00 L12.20 0"/></svg>
<svg class="i" style="left:1318px;top:482px" width="12" height="16" viewBox="1318 482 12 16" stroke="#bdbdbd" stroke-width="1.3"><path d="M1327.8 484.2 L1320.8 490.2 L1327.8 496.2"/></svg>
<div class="a" style="left:22px;top:518px;width:1311px;height:27px;background:#5a5a5a"></div>
<div class="a" style="left:22px;top:520.3px;width:1311px;height:22.3px;background:#6aa5cb"></div>
<div class="a" style="left:22px;top:521px;width:1311px;height:21px;background:#fff"></div>
<div class="a" style="left:22px;top:520.3px;width:4px;height:22.6px;background:#0077b6"></div>
<div class="a" style="left:57px;top:521px;width:29.6px;height:21px;background:#d5d1ca"></div>
<div class="a" style="left:634px;top:521px;width:86px;height:21px;background:#dde678"></div>
<div class="a" style="left:720px;top:521px;width:301.6px;height:21px;background:#bbddf8"></div>
<div class="a cb" style="left:31px;top:523px;width:15px;height:16px"></div>
<span class="t" style="left:72.82px;top:525.00px;font-size:14.3px;line-height:14.3px;color:#141414">1</span>
<span class="t" style="left:95.23px;top:525.00px;font-size:14.3px;line-height:14.3px;letter-spacing:0.061px;color:#141414">Transport</span>
<span class="t" style="left:190.23px;top:525.00px;font-size:14.3px;line-height:14.3px;letter-spacing:0.161px;color:#141414">Transport</span>
<span class="t" style="left:329.42px;top:525.00px;font-size:14.3px;line-height:14.3px;color:#141414">1</span>
<span class="t" style="left:352.83px;top:525.00px;font-size:14.3px;line-height:14.3px;letter-spacing:0.581px;color:#141414">szt</span>
<span class="t" style="left:412.03px;top:525.00px;font-size:14.3px;line-height:14.3px;letter-spacing:-0.159px;color:#141414">1 500,00</span>
<span class="t" style="left:484.63px;top:525.00px;font-size:14.3px;line-height:14.3px;color:#141414">0</span>
<span class="t" style="left:535.43px;top:525.00px;font-size:14.3px;line-height:14.3px;letter-spacing:-0.328px;color:#141414">0,00</span>
<span class="t" style="left:602.03px;top:525.00px;font-size:14.3px;line-height:14.3px;letter-spacing:-0.328px;color:#141414">0,00</span>
<span class="t" style="left:660.03px;top:525.00px;font-size:14.3px;line-height:14.3px;letter-spacing:-0.159px;color:#141414">1 500,00</span>
<span class="t" style="left:746.03px;top:525.00px;font-size:14.3px;line-height:14.3px;letter-spacing:-0.159px;color:#141414">1 500,00</span>
<span class="t" style="left:814.67px;top:526.00px;font-size:13.2px;line-height:13.2px;color:#141414">23%</span>
<span class="t" style="left:893.63px;top:525.00px;font-size:14.3px;line-height:14.3px;letter-spacing:-0.118px;color:#141414">345,00</span>
<span class="t" style="left:961.73px;top:525.00px;font-size:14.3px;line-height:14.3px;letter-spacing:-0.159px;color:#141414">1 845,00</span>
</section>
<section id="cost-transfer" aria-label="Przeniesienie kosztów">
<div class="a" style="left:26.3px;top:573.1px;width:2.2px;height:2.2px;background:#444;border-radius:.5px"></div>
<div class="a" style="left:26.3px;top:577.8px;width:2.2px;height:2.2px;background:#444;border-radius:.5px"></div>
<div class="a" style="left:26.3px;top:582.5px;width:2.2px;height:2.2px;background:#444;border-radius:.5px"></div>
<svg class="i" style="left:51px;top:570px" width="12" height="16" viewBox="51 570 12 16" stroke="#cfcfcf" stroke-width="1.3"><path d="M59 572.8 L53.8 578 L59 583.2"/></svg>
<span class="t" style="left:86.24px;top:571.00px;font-size:14px;line-height:14px;letter-spacing:0.188px;color:#555;-webkit-text-stroke:.3px">Stopka VAT</span>
<span class="t" style="left:200.44px;top:571.00px;font-size:14px;line-height:14px;letter-spacing:0.169px;color:#555;-webkit-text-stroke:.3px">Stopka VAT - grupy</span>
<div class="a" style="left:344.5px;top:563.2px;width:183px;height:33px;background:#fff;border-radius:10px 10px 0 0"></div>
<div class="a" style="left:334.5px;top:586px;width:10px;height:10px;background:radial-gradient(circle at 0 0,rgba(255,255,255,0) 9.5px,#fff 10px)"></div>
<div class="a" style="left:527.5px;top:586px;width:10px;height:10px;background:radial-gradient(circle at 100% 0,rgba(255,255,255,0) 9.5px,#fff 10px)"></div>
<span class="t" style="left:364.44px;top:571.00px;font-size:14px;line-height:14px;letter-spacing:0.260px;-webkit-text-stroke:.3px;-webkit-text-stroke:.35px">Przeniesienie kosztów</span>
<div class="a" style="left:363px;top:592px;width:147px;height:4px;background:linear-gradient(180deg,rgba(10,132,207,0.05) 0px,rgba(10,132,207,0.05) 1px,rgba(10,132,207,1.00) 1px,rgba(10,132,207,1.00) 2px,rgba(10,132,207,1.00) 2px,rgba(10,132,207,1.00) 3px,rgba(10,132,207,0.95) 3px,rgba(10,132,207,0.95) 4px)"></div>
<span class="t" style="left:552.84px;top:571.00px;font-size:14px;line-height:14px;letter-spacing:0.341px;color:#555;-webkit-text-stroke:.3px;padding-bottom:4px;-webkit-mask-image:linear-gradient(90deg,#000 170px,rgba(0,0,0,.25) 212px);mask-image:linear-gradient(90deg,#000 170px,rgba(0,0,0,.25) 212px)">Wymiary kontrolingowe nagłówka</span>
<span class="t" style="left:820.44px;top:571.00px;font-size:14px;line-height:14px;letter-spacing:0.389px;color:#555;-webkit-text-stroke:.3px;padding-bottom:4px;-webkit-mask-image:linear-gradient(90deg,#000 150px,rgba(0,0,0,.25) 186px);mask-image:linear-gradient(90deg,#000 150px,rgba(0,0,0,.25) 186px)">Wymiary kontrolingowe linijki</span>
<span class="t" style="left:1055.84px;top:571.00px;font-size:14px;line-height:14px;letter-spacing:0.387px;color:#555;-webkit-text-stroke:.3px">Historia zmian linijek</span>
<span class="t" style="left:1230.04px;top:571.00px;font-size:14px;line-height:14px;letter-spacing:0.096px;color:#555;-webkit-text-stroke:.3px">Rozliczenie za</span>
<svg class="i" style="left:1327px;top:570px" width="14" height="16" viewBox="1327 570 14 16" stroke="#aaa" stroke-width="1.3"><path d="M1330.4 572.2 L1336.8 578.2 L1330.4 584.2"/></svg>
<div class="a panel" style="left:11px;top:596.2px;width:1333px;height:220px;border-radius:10px 10px 9px 9px"></div>
<svg class="i" style="left:26.2px;top:608.4px" width="26" height="24" viewBox="-1 -1 26 24" stroke="#c9c9c9" stroke-width="1.25" stroke-linejoin="miter"><path d="M6.2 18.7 H0.65 V0.65 H9.8 L14.9 5.8 V8.8"/><path d="M9.8 0.8 V5.8 H14.8"/></svg>
<svg class="i" style="left:33.8px;top:617.2px" width="14" height="14" viewBox="-7 -7 14 14" stroke="#f3a9a7" stroke-width="1.3"><circle cx="0" cy="0" r="5.3" fill="#fff"/><path d="M-2.1 -2.1 L2.1 2.1 M2.1 -2.1 L-2.1 2.1"/></svg>
<svg class="i" style="left:62.0px;top:608.4px" width="24" height="24" viewBox="-1 -1 24 24" stroke="#333" stroke-width="1.35"><rect x="4.4" y="0.6" width="12.2" height="6.4"/><path d="M4.4 16 H0.7 V7 H20.3 V16 H16.6"/><rect x="4.4" y="12.2" width="12.2" height="7.9" fill="#fff"/><path d="M6.8 14.9 H14.2 M6.8 17.5 H14.2" stroke="#8c8c8c" stroke-width="1.1"/><path d="M2.6 9.7 H5" stroke="#2a8fd6" stroke-width="1.3"/></svg>
<svg class="i" style="left:92.8px;top:615.4px" width="12.2" height="8.1" viewBox="-2 -2 12.2 8.1" stroke="#222" stroke-width="1.5"><path d="M0 0 L4.10 4.10 L8.20 0"/></svg>
<div class="a sep" style="left:118.8px;top:611.6px;height:15.2px"></div>
<div class="a btn" style="left:128.3px;top:604.4px;width:34px;height:30.4px"></div>
<div class="a" style="left:143.9px;top:613.3px;width:2.2px;height:2.2px;background:#444;border-radius:.5px"></div>
<div class="a" style="left:143.9px;top:618.1px;width:2.2px;height:2.2px;background:#444;border-radius:.5px"></div>
<div class="a" style="left:143.9px;top:622.9px;width:2.2px;height:2.2px;background:#444;border-radius:.5px"></div>
<div class="a" style="left:1018.6px;top:605px;width:103.4px;height:28px;border-radius:14px;background:#e0f0f9"></div>
<svg class="i" style="left:1031.3px;top:607.5px" width="21.5" height="24.0" viewBox="-2 -2 21.5 24" stroke="#0b73b3" stroke-width="1.45" stroke-linejoin="miter"><path d="M11.3 2.9 V0.8 L0.8 5.4 V16.5 L3.8 15.1"/><path d="M6.3 8.3 L16.8 3.7 V14.5 L6.3 19.1 Z"/></svg>
<span class="t" style="left:1061.34px;top:612.00px;font-size:14px;line-height:14px;font-weight:700;letter-spacing:-0.448px;color:#1480c4">Główny</span>
<div class="a sep" style="left:1135.6px;top:611.4px;height:15.2px"></div>
<svg class="i" style="left:1154.8px;top:607.4px" width="23" height="23" viewBox="-1 -1 23 23" stroke-width="1.3"><rect x="0.7" y="8.4" width="4.8" height="11.7" fill="#a9dcb6" stroke="#17a04a"/><rect x="7.9" y="0.7" width="4.8" height="19.4" fill="#fbe092" stroke="#f08c28"/><rect x="15.1" y="5" width="4.8" height="15.1" fill="#f6b4b6" stroke="#e6262c"/></svg>
<svg class="i" style="left:1181.6px;top:615.4px" width="12.0" height="8.0" viewBox="-2 -2 12.0 8.0" stroke="#222" stroke-width="1.5"><path d="M0 0 L4.00 4.00 L8.00 0"/></svg>
<svg class="i" style="left:1206px;top:607px" width="26" height="26" viewBox="1206 607 26 26" stroke="#333" stroke-width="1.3">
<path d="M1218.2 628 H1209.1 V609.7 H1227.1 V619.2"/><rect x="1209.1" y="609.7" width="18" height="3.7" fill="#bcbcbc"/><circle cx="1221.8" cy="622.5" r="3.8" fill="#fff"/><path d="M1224.4 625.2 L1228.2 629.4" stroke-width="1.5"/></svg>
<span class="t" style="left:1233.04px;top:612.00px;font-size:14px;line-height:14px;letter-spacing:0.105px">Podgląd</span>
<svg class="i" style="left:1298.4px;top:605.2px" width="28" height="28" viewBox="-14.4 -14.4 28.8 28.8" stroke="#333" stroke-width="1.45" stroke-linejoin="miter"><path d="M-9.9 -0.6 A9.9 9.9 0 0 1 9.4 -3.2"/><path d="M10.3 -10.6 V-3.2 H3"/><path d="M9.9 1.4 A9.9 9.9 0 0 1 -9.4 3.4"/><path d="M-10.3 10.8 V3.4 H-3"/></svg>
<div class="a gh" style="left:22px;top:642px;width:1311px;height:52.2px"></div>
<div class="a" style="left:22px;top:642px;width:34px;height:52.2px;background:#f5f5f5"></div>
<div class="a" style="left:56px;top:642px;width:395.6px;height:26px;background:#ececec"></div>
<div class="a" style="left:22px;top:694px;width:1311px;height:1px;background:#e8e8e8"></div>
<div class="a" style="left:56px;top:668px;width:395.6px;height:1px;background:#e8e8e8"></div>
<div class="a" style="left:496.6px;top:668px;width:818.8px;height:1px;background:#e8e8e8"></div>
<div class="a" style="left:56px;top:642px;width:1px;height:52px;background:#e8e8e8"></div>
<div class="a" style="left:451px;top:642px;width:1px;height:52px;background:#e8e8e8"></div>
<div class="a" style="left:496px;top:642px;width:1px;height:52px;background:#e8e8e8"></div>
<div class="a" style="left:641px;top:642px;width:1px;height:52px;background:#e8e8e8"></div>
<div class="a" style="left:1315px;top:642px;width:1px;height:52px;background:#e8e8e8"></div>
<div class="a" style="left:562px;top:668px;width:1px;height:26px;background:#e8e8e8"></div>
<div class="a" style="left:727px;top:668px;width:1px;height:26px;background:#e8e8e8"></div>
<div class="a" style="left:780px;top:668px;width:1px;height:26px;background:#e8e8e8"></div>
<div class="a" style="left:857px;top:668px;width:1px;height:26px;background:#e8e8e8"></div>
<div class="a" style="left:1013px;top:668px;width:1px;height:26px;background:#e8e8e8"></div>
<div class="a" style="left:1264px;top:668px;width:1px;height:26px;background:#e8e8e8"></div>
<span class="t" style="left:61.24px;top:649.00px;font-size:14px;line-height:14px;letter-spacing:0.426px;color:#333;-webkit-text-stroke:.3px;-webkit-text-stroke:.4px">Koszt</span>
<span class="t" style="left:456.84px;top:649.00px;font-size:14px;line-height:14px;letter-spacing:0.174px;color:#333;-webkit-text-stroke:.3px;-webkit-text-stroke:.4px">Opis</span>
<span class="t" style="left:501.84px;top:649.00px;font-size:14px;line-height:14px;letter-spacing:0.402px;color:#333;-webkit-text-stroke:.3px;-webkit-text-stroke:.4px">Kontrahent</span>
<span class="t" style="left:646.84px;top:649.00px;font-size:14px;line-height:14px;letter-spacing:0.232px;color:#333;-webkit-text-stroke:.3px;-webkit-text-stroke:.4px">Dowód</span>
<span class="t" style="left:61.24px;top:673.00px;font-size:14px;line-height:14px;letter-spacing:0.406px;color:#333;-webkit-text-stroke:.3px;-webkit-text-stroke:.4px">Symbol</span>
<span class="t" style="left:383.74px;top:673.00px;font-size:14px;line-height:14px;letter-spacing:0.091px;color:#333;-webkit-text-stroke:.3px;-webkit-text-stroke:.4px">Wyliczony</span>
<span class="t" style="left:501.84px;top:673.00px;font-size:14px;line-height:14px;letter-spacing:0.321px;color:#333;-webkit-text-stroke:.3px;-webkit-text-stroke:.4px">Logo</span>
<span class="t" style="left:567.84px;top:673.00px;font-size:14px;line-height:14px;letter-spacing:0.231px;color:#333;-webkit-text-stroke:.3px;-webkit-text-stroke:.4px">Nazwa</span>
<span class="t" style="left:646.84px;top:673.00px;font-size:14px;line-height:14px;letter-spacing:0.743px;color:#333;-webkit-text-stroke:.3px;-webkit-text-stroke:.4px">Mag</span>
<span class="t" style="left:732.84px;top:673.00px;font-size:14px;line-height:14px;color:#333;-webkit-text-stroke:.3px;-webkit-text-stroke:.4px">ND</span>
<span class="t" style="left:786.24px;top:673.00px;font-size:14px;line-height:14px;color:#333;-webkit-text-stroke:.3px;-webkit-text-stroke:.4px">RD</span>
<span class="t" style="left:862.84px;top:673.00px;font-size:14px;line-height:14px;letter-spacing:0.226px;color:#333;-webkit-text-stroke:.3px;-webkit-text-stroke:.4px">Numer</span>
<span class="t" style="left:1019.04px;top:673.00px;font-size:14px;line-height:14px;letter-spacing:0.155px;color:#333;-webkit-text-stroke:.3px;-webkit-text-stroke:.4px">Numer zew.</span>
<span class="t" style="left:1178.24px;top:673.00px;font-size:14px;line-height:14px;letter-spacing:0.181px;color:#333;-webkit-text-stroke:.3px;-webkit-text-stroke:.4px">Data</span>
<div class="a" style="left:1264.6px;top:669.2px;width:50.8px;height:25px;overflow:hidden"><span class="t" style="left:5.74px;top:4.00px;font-size:14px;line-height:14px;letter-spacing:0.226px;color:#333;-webkit-text-stroke:.3px;-webkit-text-stroke:.4px">Numer</span></div>
<div class="a cb" style="left:31.6px;top:676.4px;width:14.4px;height:15px"></div>
<div class="a pill" style="left:1264.5px;top:635px;width:34px;height:16.6px"></div>
<svg class="i" style="left:1273.6px;top:638.6px" width="16.2" height="10.0" viewBox="-2 -2 16.2 10.0" stroke="#a2a2a2" stroke-width="1.9"><path d="M0 0 L6.10 6.00 L12.20 0"/></svg>
<svg class="i" style="left:1318px;top:659px" width="12" height="16" viewBox="1318 659 12 16" stroke="#bdbdbd" stroke-width="1.3"><path d="M1327.8 661.6 L1320.8 667.6 L1327.8 673.6"/></svg>
<div class="a hl" style="left:22px;top:795.4px;width:1311px"></div>
<div class="a" style="left:36px;top:800px;width:1049px;height:9px;border-radius:4.5px;background:#e5e5e5"></div>
<svg class="i" style="left:24px;top:798px" width="10" height="12" viewBox="24 798 10 12" stroke="#dcdcdc" stroke-width="1.3"><path d="M31.4 800.6 L27.2 804.4 L31.4 808.2"/></svg>
<svg class="i" style="left:1322px;top:798px" width="10" height="12" viewBox="1322 798 10 12" stroke="#dcdcdc" stroke-width="1.3"><path d="M1324.6 800.6 L1328.8 804.4 L1324.6 808.2"/></svg>
<div class="a" style="left:129.4px;top:636px;width:296px;height:148.4px;background:#fff;border-radius:5px;box-shadow:2px 3px 10px rgba(0,0,0,.24),0 0 2px rgba(0,0,0,.15)"></div>
<div class="a" style="left:169px;top:681px;width:217px;height:30px;box-sizing:border-box;border:2px solid #ff0808;border-radius:7px;box-shadow:inset 0 0 4px rgba(0,0,0,.36),0 0 0 .15px rgba(255,0,0,.8),0 0 5px rgba(0,0,0,.16)"></div>
<div class="a" style="left:168px;top:742px;width:217px;height:33px;box-sizing:border-box;border:2px solid #ff0808;border-radius:7px;box-shadow:inset 0 0 4px rgba(0,0,0,.36),0 0 0 .15px rgba(255,0,0,.8),0 0 5px rgba(0,0,0,.16)"></div>
<span class="t" style="left:178.63px;top:655.00px;font-size:14.3px;line-height:14.3px;letter-spacing:0.008px;color:#1a1a1a">Dodaj dowód</span>
<span class="t" style="left:178.63px;top:687.00px;font-size:14.3px;line-height:14.3px;letter-spacing:0.014px;color:#1a1a1a">Dodaj wiele dowodów</span>
<span class="t" style="left:178.63px;top:720.00px;font-size:14.3px;line-height:14.3px;letter-spacing:-0.016px;color:#1a1a1a">Dodaj koszt</span>
<span class="t" style="left:178.63px;top:752.00px;font-size:14.3px;line-height:14.3px;letter-spacing:0.053px;color:#1a1a1a">Dodaj koszt do wielu dowodów</span>
</section>
</div>
</body>
</html>
